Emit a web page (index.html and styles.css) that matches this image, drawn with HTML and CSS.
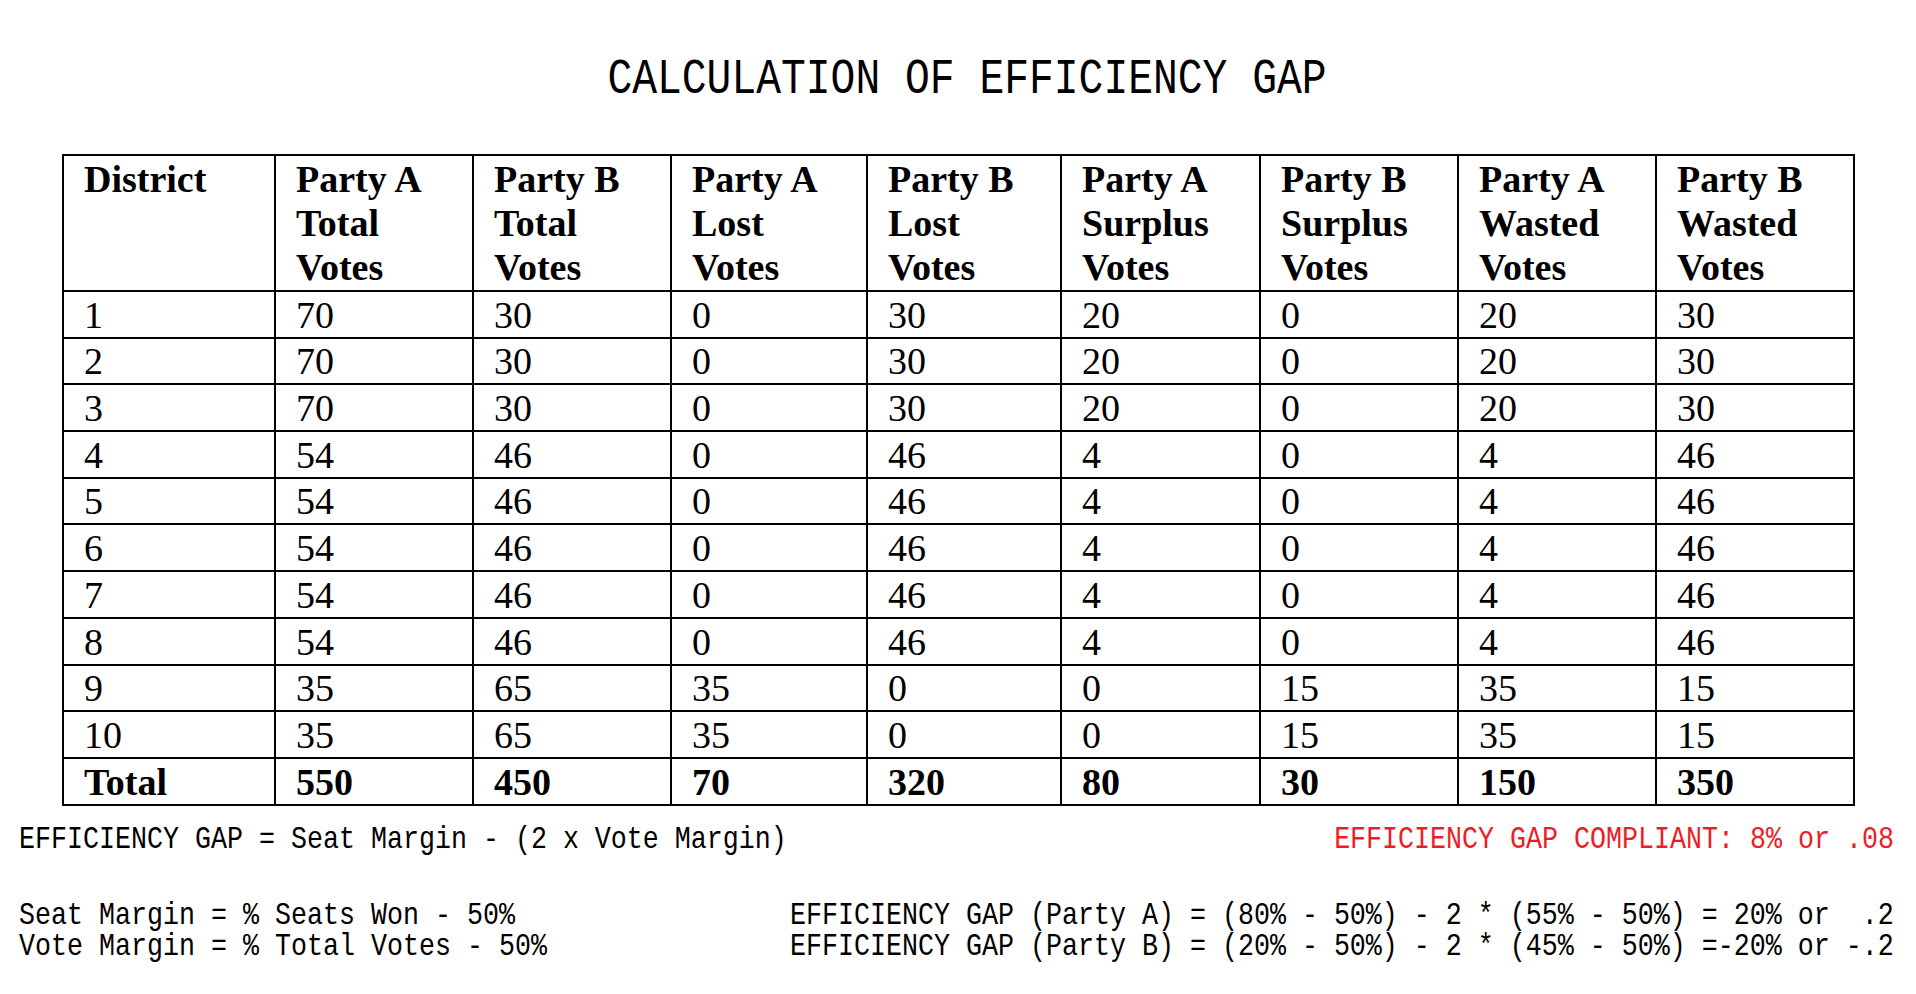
FILE: index.html
```html
<!DOCTYPE html>
<html lang="en">
<head>
<meta charset="utf-8">
<title>Calculation of Efficiency Gap</title>
<link rel="stylesheet" href="styles.css">
</head>
<body>
<main class="page">
  <h1 class="title">CALCULATION OF EFFICIENCY GAP</h1>

  <table class="gap-table">
    <colgroup>
      <col class="col-district">
      <col class="col-a">
      <col class="col-b">
      <col class="col-c">
      <col class="col-d">
      <col class="col-e">
      <col class="col-f">
      <col class="col-g">
      <col class="col-h">
    </colgroup>
    <thead>
      <tr>
        <th>District</th>
        <th>Party A<br>Total<br>Votes</th>
        <th>Party B<br>Total<br>Votes</th>
        <th>Party A<br>Lost<br>Votes</th>
        <th>Party B<br>Lost<br>Votes</th>
        <th>Party A<br>Surplus<br>Votes</th>
        <th>Party B<br>Surplus<br>Votes</th>
        <th>Party A<br>Wasted<br>Votes</th>
        <th>Party B<br>Wasted<br>Votes</th>
      </tr>
    </thead>
    <tbody>
      <tr><td>1</td><td>70</td><td>30</td><td>0</td><td>30</td><td>20</td><td>0</td><td>20</td><td>30</td></tr>
      <tr><td>2</td><td>70</td><td>30</td><td>0</td><td>30</td><td>20</td><td>0</td><td>20</td><td>30</td></tr>
      <tr><td>3</td><td>70</td><td>30</td><td>0</td><td>30</td><td>20</td><td>0</td><td>20</td><td>30</td></tr>
      <tr><td>4</td><td>54</td><td>46</td><td>0</td><td>46</td><td>4</td><td>0</td><td>4</td><td>46</td></tr>
      <tr><td>5</td><td>54</td><td>46</td><td>0</td><td>46</td><td>4</td><td>0</td><td>4</td><td>46</td></tr>
      <tr><td>6</td><td>54</td><td>46</td><td>0</td><td>46</td><td>4</td><td>0</td><td>4</td><td>46</td></tr>
      <tr><td>7</td><td>54</td><td>46</td><td>0</td><td>46</td><td>4</td><td>0</td><td>4</td><td>46</td></tr>
      <tr><td>8</td><td>54</td><td>46</td><td>0</td><td>46</td><td>4</td><td>0</td><td>4</td><td>46</td></tr>
      <tr><td>9</td><td>35</td><td>65</td><td>35</td><td>0</td><td>0</td><td>15</td><td>35</td><td>15</td></tr>
      <tr><td>10</td><td>35</td><td>65</td><td>35</td><td>0</td><td>0</td><td>15</td><td>35</td><td>15</td></tr>
      <tr class="total-row"><td>Total</td><td>550</td><td>450</td><td>70</td><td>320</td><td>80</td><td>30</td><td>150</td><td>350</td></tr>
    </tbody>
  </table>

  <div class="formula-row">
    <div class="mono-line">EFFICIENCY GAP = Seat Margin - (2 x Vote Margin)</div>
    <div class="mono-line compliant">EFFICIENCY GAP COMPLIANT: 8% or .08</div>
  </div>

  <div class="formula-grid">
    <div class="defs">
      <div class="mono-line">Seat Margin = % Seats Won - 50%</div>
      <div class="mono-line">Vote Margin = % Total Votes - 50%</div>
    </div>
    <div class="calcs">
      <div class="mono-line">EFFICIENCY GAP (Party A) = (80% - 50%) - 2 * (55% - 50%) = 20% or  .2</div>
      <div class="mono-line">EFFICIENCY GAP (Party B) = (20% - 50%) - 2 * (45% - 50%) =-20% or -.2</div>
    </div>
  </div>
</main>
</body>
</html>
```

FILE: styles.css
```css
html, body {
  margin: 0;
  padding: 0;
  background: #ffffff;
  color: #000000;
}

.page {
  width: 1916px;
  padding-top: 56px;
  font-family: "Liberation Serif", "Times New Roman", serif;
}

.title {
  margin: 0;
  padding-left: 18px;
  text-align: center;
  font-family: "Liberation Mono", "Courier New", monospace;
  font-weight: 400;
  font-size: 41.33px;
  line-height: 48px;
  white-space: pre;
  transform: scaleY(1.19);
}

.gap-table {
  margin: 50px 0 0 62px;
  width: 1791px;
  table-layout: fixed;
  border-collapse: collapse;
  font-family: "Liberation Serif", "Times New Roman", serif;
  font-size: 38px;
}

.col-district { width: 212px; }
.col-a { width: 198px; }
.col-b { width: 198px; }
.col-c { width: 196px; }
.col-d { width: 194px; }
.col-e { width: 199px; }
.col-f { width: 198px; }
.col-g { width: 198px; }
.col-h { width: 198px; }

.gap-table th,
.gap-table td {
  border: 2px solid #000000;
  text-align: left;
  vertical-align: top;
  padding: 0.7px 20px 0;
  line-height: 44px;
  white-space: nowrap;
}

.gap-table th {
  font-weight: 700;
  padding: 1px 20px 1px;
}

.gap-table td {
  font-weight: 400;
}

.gap-table .total-row td {
  font-weight: 700;
}

.formula-row {
  display: flex;
  justify-content: space-between;
  margin-top: 18px;
  padding: 0 22px 0 19px;
  font-family: "Liberation Mono", "Courier New", monospace;
  font-size: 26.667px;
  line-height: 32px;
}

.formula-grid {
  display: grid;
  grid-template-columns: 771px auto;
  margin-top: 45px;
  padding-left: 19px;
  font-family: "Liberation Mono", "Courier New", monospace;
  font-size: 26.667px;
  line-height: 31px;
}

.mono-line {
  white-space: pre;
  transform: scaleY(1.19);
}

.compliant {
  color: #ee1c25;
}
```
